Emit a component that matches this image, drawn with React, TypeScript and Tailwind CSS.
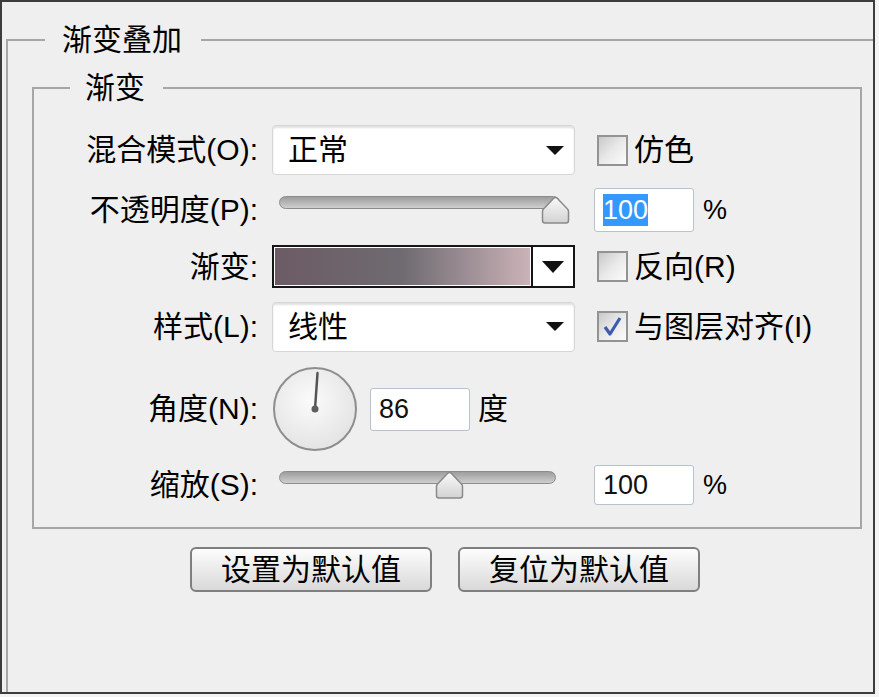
import React from "react";

const Triangle = ({ w, h }: { w: number; h: number }) => (
  <svg width={w} height={h} viewBox={`0 0 ${w} ${h}`}>
    <polygon points={`0,0 ${w},0 ${w / 2},${h}`} fill="#111" />
  </svg>
);

const Select = ({ value }: { value: string }) => (
  <div className="ml-[14px] flex h-[50px] w-[303px] items-center justify-between rounded-[4px] border border-[#d6d6d6] bg-white pl-[15px] pr-[10px] shadow-[inset_0_2px_2px_rgba(0,0,0,0.12)]">
    <span className="text-[30px] leading-none">{value}</span>
    <Triangle w={18} h={9} />
  </div>
);

const Checkbox = ({ checked }: { checked?: boolean }) => (
  <div className="relative ml-[22px] h-[31px] w-[31px] border-2 border-[#939393] bg-linear-to-br from-[#c9c9c9] via-[#e9e9e9] to-[#fbfbfb]">
    {checked && (
      <svg className="absolute left-[2px] top-[2px]" width="23" height="23" viewBox="0 0 23 23">
        <path d="M4 12 L9 19 L19 3" fill="none" stroke="#3f5bb0" strokeWidth="3.2" strokeLinejoin="round" />
      </svg>
    )}
  </div>
);

const Slider = ({ trackW, thumbX }: { trackW: number; thumbX: number }) => (
  <div className="relative ml-[21px] h-[30px] w-[291px]">
    <div
      className="absolute left-0 top-[1px] h-[13px] rounded-full border border-[#8c8c8c] bg-linear-to-b from-[#9d9d9d] to-[#cfcfcf]"
      style={{ width: trackW }}
    />
    <svg className="absolute top-[1px]" style={{ left: thumbX }} width="29" height="29" viewBox="0 0 29 29">
      <defs>
        <linearGradient id="tg" x1="0" y1="0" x2="0" y2="1">
          <stop offset="0" stopColor="#fafafa" />
          <stop offset="1" stopColor="#d2d2d2" />
        </linearGradient>
      </defs>
      <path
        d="M14.5 1.5 Q15.5 1.5 16.5 2.5 L26.5 13 Q27.5 14 27.5 15.5 L27.5 24.5 Q27.5 27 25 27 L4 27 Q1.5 27 1.5 24.5 L1.5 15.5 Q1.5 14 2.5 13 L12.5 2.5 Q13.5 1.5 14.5 1.5 Z"
        fill="url(#tg)"
        stroke="#8a8a8a"
        strokeWidth="1.5"
      />
    </svg>
  </div>
);

const NumInput = ({ children, w = 100, h = 44, ml }: { children: React.ReactNode; w?: number; h?: number; ml: string }) => (
  <div
    className={`${ml} flex items-center rounded-[3px] border border-[#b8c2cf] bg-white pl-[8px] text-[27px] text-[#111]`}
    style={{ width: w, height: h }}
  >
    {children}
  </div>
);

const Label = ({ children }: { children: React.ReactNode }) => (
  <div className="w-[224px] text-right text-[30px] leading-none text-black">{children}</div>
);

export default function App() {
  const needleAngle = (86 * Math.PI) / 180;
  const nx = 43 + Math.cos(needleAngle) * 36;
  const ny = 43 - Math.sin(needleAngle) * 36;

  return (
    <div className="h-[697px] w-[879px] bg-[#f3f3f3] font-['Liberation_Sans','Noto_Sans_CJK_SC',sans-serif] text-black">
      <div className="flex h-[694px] w-[875px] flex-col border-2 border-[#3c3c3c] bg-[#efefef]">
        <fieldset className="mt-[21px] ml-[4px] min-w-0 flex-1 border-t-2 border-l-2 border-[#a6a6a6] pt-[14px] pl-[24px] pr-[11px]">
          <legend className="ml-[13px] h-[34px] pl-[17px] pr-[19px] text-[30px] leading-[34px]">渐变叠加</legend>

          <fieldset className="w-[830px] min-w-0 border-2 border-[#a6a6a6] pt-[20px] pb-[22px]">
            <legend className="ml-[36px] h-[34px] pl-[15px] pr-[18px] text-[30px] leading-[34px]">渐变</legend>

            <div className="flex flex-col">
              {/* Row 1 */}
              <div className="flex h-[50px] items-center">
                <Label>混合模式(O):</Label>
                <Select value="正常" />
                <Checkbox />
                <span className="ml-[6px] text-[30px] leading-none">仿色</span>
              </div>

              {/* Row 2 */}
              <div className="mt-[13px] flex h-[44px] items-center">
                <Label>不透明度(P):</Label>
                <Slider trackW={281} thumbX={262} />
                <NumInput ml="ml-[24px]">
                  <span className="inline-block bg-[#3399ff] leading-[32px] text-white">100</span>
                </NumInput>
                <span className="ml-[9px] text-[27px] leading-none">%</span>
              </div>

              {/* Row 3 */}
              <div className="mt-[13px] flex h-[43px] items-center">
                <Label>渐变:</Label>
                <div className="ml-[14px] flex h-[43px] w-[303px] border-2 border-[#151515] bg-white">
                  <div className="m-[1px] flex-1 bg-linear-to-r from-[#6c5b65] via-[#6f6b71] to-[#cbb3b8]" />
                  <div className="flex w-[42px] items-center justify-center border-l-2 border-[#151515] bg-white">
                    <Triangle w={22} h={12} />
                  </div>
                </div>
                <Checkbox />
                <span className="ml-[6px] text-[30px] leading-none">反向(R)</span>
              </div>

              {/* Row 4 */}
              <div className="mt-[13px] flex h-[51px] items-center">
                <Label>样式(L):</Label>
                <Select value="线性" />
                <Checkbox checked />
                <span className="ml-[6px] text-[30px] leading-none">与图层对齐(I)</span>
              </div>

              {/* Row 5 */}
              <div className="mt-[15px] flex h-[84px] items-center">
                <Label>角度(N):</Label>
                <svg className="ml-[14px]" width="86" height="86" viewBox="0 0 86 86">
                  <defs>
                    <radialGradient id="dg" cx="0.45" cy="0.4" r="0.65">
                      <stop offset="0" stopColor="#fbfbfb" />
                      <stop offset="1" stopColor="#e2e2e2" />
                    </radialGradient>
                  </defs>
                  <circle cx="43" cy="43" r="41" fill="url(#dg)" stroke="#8e8e8e" strokeWidth="2" />
                  <line x1="43" y1="43" x2={nx} y2={ny} stroke="#555" strokeWidth="2.5" strokeLinecap="round" />
                  <circle cx="43" cy="43" r="3.5" fill="#5e5e5e" />
                </svg>
                <NumInput ml="ml-[12px]" h={43}>
                  <span>86</span>
                </NumInput>
                <span className="ml-[8px] text-[30px] leading-none">度</span>
              </div>

              {/* Row 6 */}
              <div className="mt-[14px] flex h-[40px] items-center">
                <Label>缩放(S):</Label>
                <Slider trackW={277} thumbX={156} />
                <NumInput ml="ml-[24px]" h={40}>
                  <span>100</span>
                </NumInput>
                <span className="ml-[9px] text-[27px] leading-none">%</span>
              </div>
            </div>
          </fieldset>

          <div className="mt-[18px] flex gap-[26px] pl-[158px]">
            <button className="flex h-[45px] w-[242px] items-center justify-center rounded-[6px] border-2 border-[#7f7f7f] bg-linear-to-b from-[#fdfdfd] to-[#d9d9d9] text-[30px] leading-none">
              设置为默认值
            </button>
            <button className="flex h-[45px] w-[242px] items-center justify-center rounded-[6px] border-2 border-[#7f7f7f] bg-linear-to-b from-[#fdfdfd] to-[#d9d9d9] text-[30px] leading-none">
              复位为默认值
            </button>
          </div>
        </fieldset>
      </div>
    </div>
  );
}
